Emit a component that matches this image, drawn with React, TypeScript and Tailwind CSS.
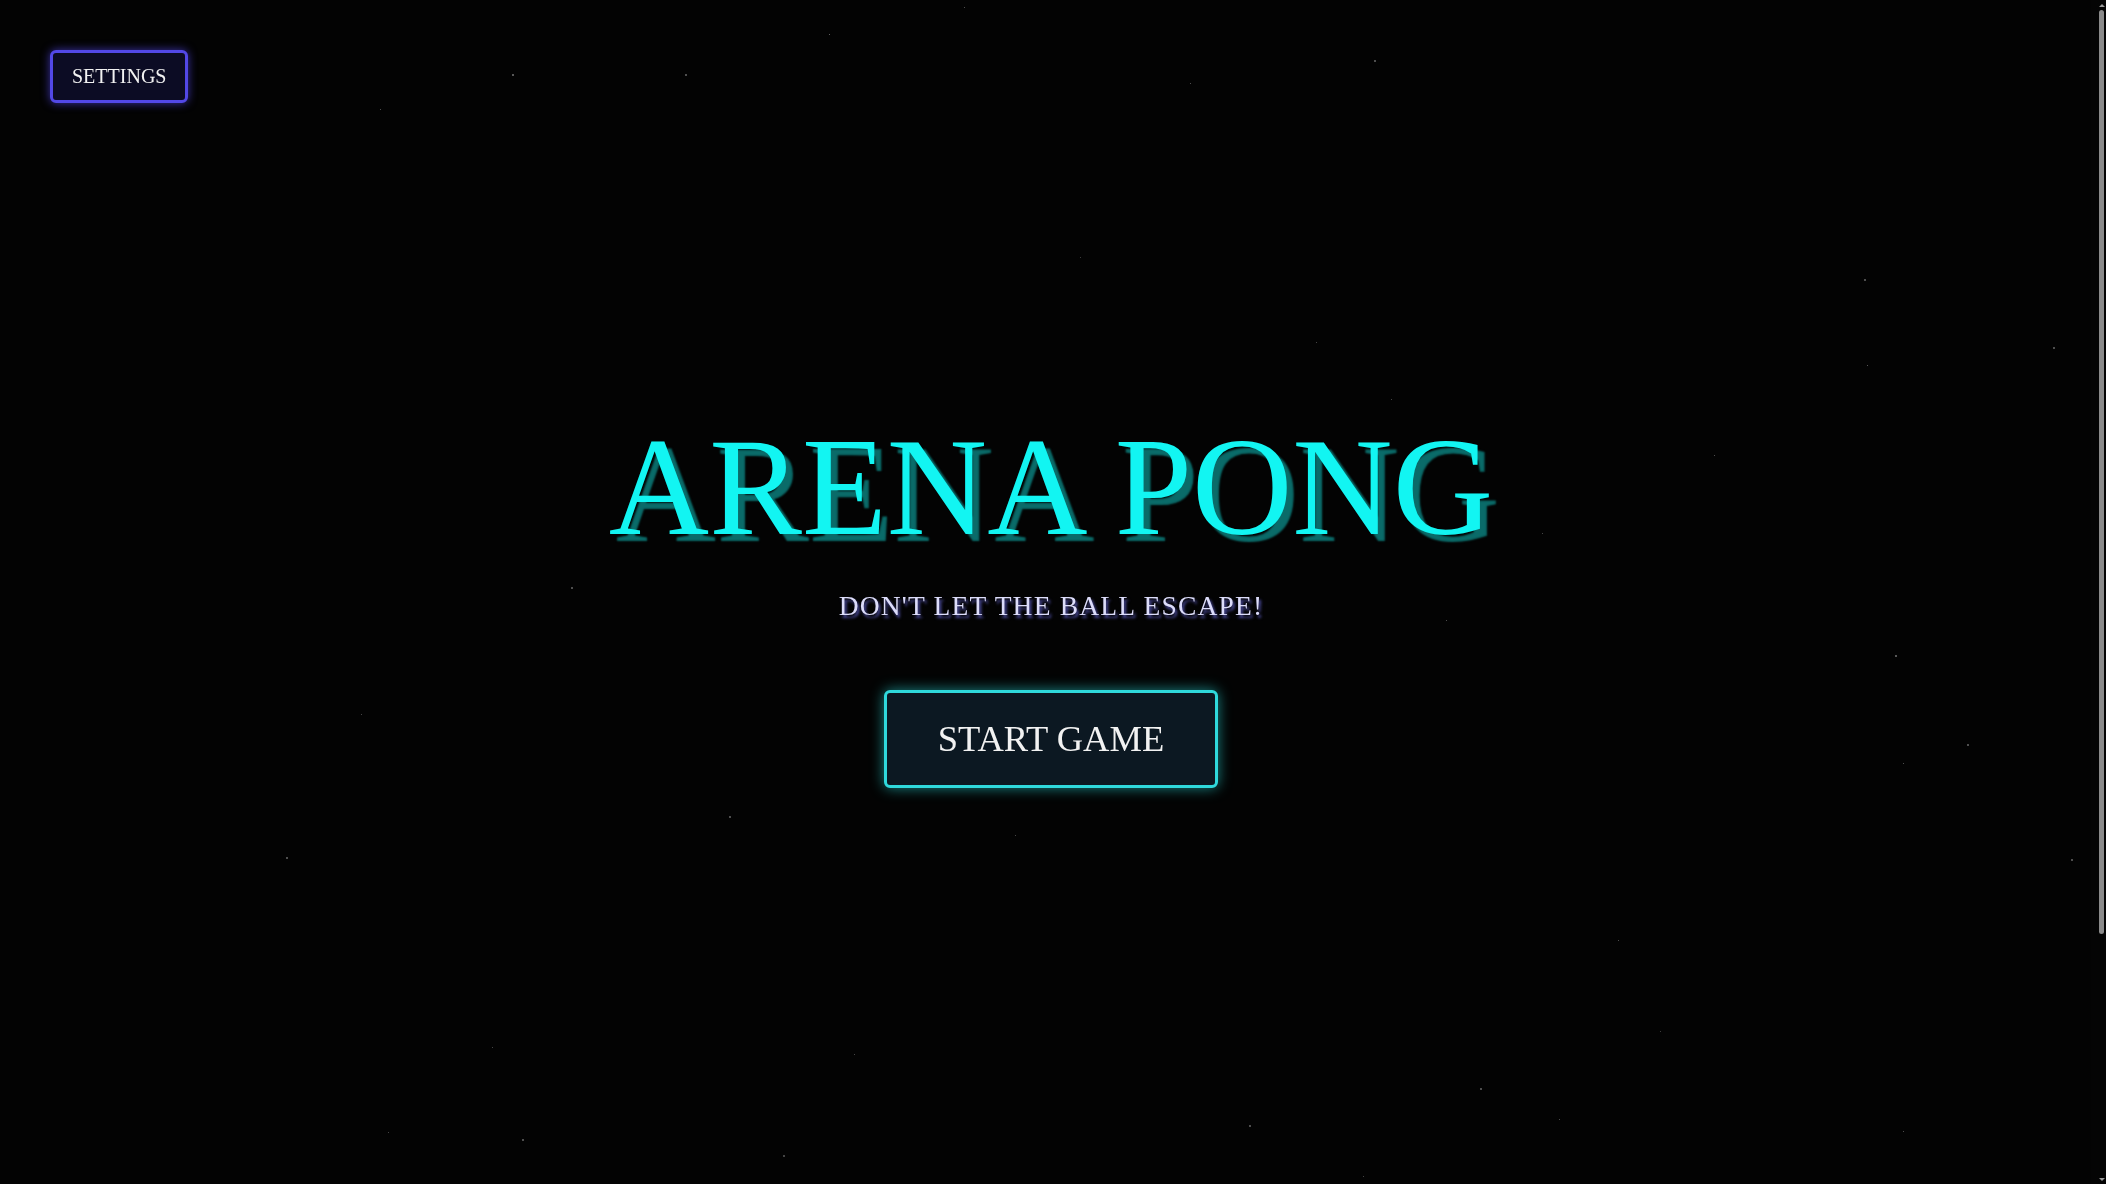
import React from "react";

// Faint background stars, placed on the viewport canvas.
const STARS: { x: number; y: number; s: number; o: number }[] = [
  { x: 169, y: 71, s: 2, o: 0.5 },
  { x: 512, y: 74, s: 2, o: 0.45 },
  { x: 380, y: 109, s: 1, o: 0.4 },
  { x: 685, y: 74, s: 2, o: 0.4 },
  { x: 829, y: 34, s: 1, o: 0.5 },
  { x: 964, y: 7, s: 1, o: 0.4 },
  { x: 1374, y: 60, s: 2, o: 0.4 },
  { x: 1190, y: 83, s: 1, o: 0.4 },
  { x: 1864, y: 279, s: 2, o: 0.4 },
  { x: 1867, y: 365, s: 1, o: 0.45 },
  { x: 2053, y: 347, s: 2, o: 0.4 },
  { x: 1316, y: 342, s: 1, o: 0.35 },
  { x: 1391, y: 399, s: 1, o: 0.35 },
  { x: 1714, y: 455, s: 1, o: 0.4 },
  { x: 1542, y: 533, s: 1, o: 0.35 },
  { x: 571, y: 587, s: 2, o: 0.4 },
  { x: 1446, y: 620, s: 1, o: 0.4 },
  { x: 1895, y: 655, s: 2, o: 0.45 },
  { x: 1967, y: 744, s: 2, o: 0.4 },
  { x: 1903, y: 763, s: 1, o: 0.4 },
  { x: 361, y: 714, s: 1, o: 0.35 },
  { x: 729, y: 816, s: 2, o: 0.4 },
  { x: 1015, y: 835, s: 1, o: 0.35 },
  { x: 286, y: 857, s: 2, o: 0.4 },
  { x: 2071, y: 859, s: 2, o: 0.4 },
  { x: 1618, y: 940, s: 1, o: 0.4 },
  { x: 1480, y: 1088, s: 2, o: 0.4 },
  { x: 1559, y: 1119, s: 1, o: 0.4 },
  { x: 1249, y: 1125, s: 2, o: 0.4 },
  { x: 1363, y: 1176, s: 1, o: 0.35 },
  { x: 854, y: 1054, s: 1, o: 0.35 },
  { x: 492, y: 1047, s: 1, o: 0.35 },
  { x: 522, y: 1139, s: 2, o: 0.4 },
  { x: 388, y: 1132, s: 1, o: 0.35 },
  { x: 783, y: 1155, s: 2, o: 0.35 },
  { x: 1903, y: 1131, s: 1, o: 0.4 },
  { x: 1080, y: 257, s: 1, o: 0.3 },
  { x: 1660, y: 1031, s: 1, o: 0.3 },
];

// Slim dark scrollbar drawn along the right edge of the viewport.
function ScrollRail() {
  return (
    <div className="pointer-events-none fixed right-0 top-0 z-20 flex h-screen w-[15px] flex-col items-end bg-[#040404] pr-[2px]">
      <div className="flex h-[10px] w-[5px] items-center justify-center">
        <span className="block h-0 w-0 border-x-[3px] border-b-[3px] border-x-transparent border-b-[#9a9a9a]" />
      </div>
      <div className="h-[924px] w-[5px] rounded-full bg-[#8a8a8a]" />
      <div className="flex-1" />
      <div className="flex h-[10px] w-[5px] items-center justify-center">
        <span className="block h-0 w-0 border-x-[3px] border-t-[3px] border-x-transparent border-t-[#9a9a9a]" />
      </div>
    </div>
  );
}

export default function App() {
  return (
    <div className="h-screen w-full overflow-y-auto bg-[#030303] [font-family:'Liberation_Serif','Times_New_Roman',serif]">
      {/* star field */}
      <div className="pointer-events-none fixed inset-0">
        {STARS.map((st, i) => (
          <span
            key={i}
            className="absolute rounded-full bg-white"
            style={{ left: st.x, top: st.y, width: st.s, height: st.s, opacity: st.o }}
          />
        ))}
      </div>

      <ScrollRail />

      {/* settings */}
      <button className="fixed left-[50px] top-[50px] z-10 rounded-[6px] border-[3px] border-[#5248e6] bg-[#0c0c24] px-[19px] py-[12px] text-[20px] leading-[23px] text-[#f2f2f2] shadow-[0_0_10px_rgba(88,76,255,0.65)]">
        SETTINGS
      </button>

      <main className="relative flex min-h-[1488px] flex-col items-center pr-[4px] pt-[418px]">
        <h1 className="text-[139px] leading-none font-normal text-[#12f5f2] [text-shadow:7px_7px_2px_#0a6b69]">
          ARENA PONG
        </h1>
        <p className="mt-[35px] text-[27.5px] leading-none tracking-[1.2px] text-[#dcdcfa] [text-shadow:2px_3px_3px_rgba(90,90,190,0.85)]">
          DON'T LET THE BALL ESCAPE!
        </p>
        <button className="mt-[70px] rounded-[6px] border-[3px] border-[#2fd9dc] bg-[#0c1822] px-[51px] py-[25px] text-[36.5px] leading-[42px] text-[#f2f2f2] shadow-[0_0_14px_rgba(40,220,220,0.6)]">
          START GAME
        </button>
      </main>
    </div>
  );
}
